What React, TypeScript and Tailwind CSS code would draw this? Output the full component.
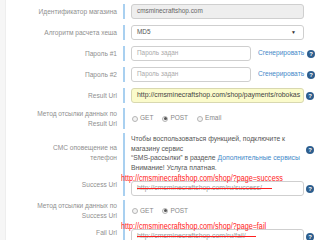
import React from "react";

const Help = ({ cls = "" }: { cls?: string }) => (
  <div className={"flex w-[8px] h-[8px] rounded-full bg-[#2d5e8e] text-white text-[6px] leading-none font-bold items-center justify-center shrink-0 " + cls}>?</div>
);

const Radio = ({ checked, label }: { checked?: boolean; label: string }) => (
  <div className="flex items-center mr-[9px]">
    <div className="w-[6px] h-[6px] rounded-full border border-[#b5b5b5] bg-[#f4f4f4] flex items-center justify-center mr-[2px]">
      {checked && <div className="w-[3px] h-[3px] rounded-full bg-[#555]" />}
    </div>
    <div className="text-[#888]">{label}</div>
  </div>
);

const Row = ({ label, children, cls = "" }: { label: React.ReactNode; children: React.ReactNode; cls?: string }) => (
  <div className={"flex items-center " + cls}>
    <div className="w-[118px] shrink-0 text-right text-[#8f8f8f] text-[6.6px] leading-[10px]">{label}</div>
    <div className="ml-[6px] border-l-2 border-[#a9d0f0] pl-[6px] flex-1 flex items-center self-stretch text-[7px] leading-none">{children}</div>
  </div>
);

const inputCls = "h-[15px] border border-[#cfcfcf] rounded-[3px] px-[5px] flex items-center leading-none overflow-hidden whitespace-nowrap shrink-0";

const Struck = ({ text }: { text: string }) => (
  <div className={inputCls + " w-[173px] text-[6.9px] text-[#999]"}>
    <div className="relative h-[9px] flex items-center">
      {text}
      <div className="absolute left-0 -right-[10px] top-[4px] h-[1px] bg-[#ff2020]" />
    </div>
  </div>
);

const Red = ({ text }: { text: string }) => (
  <div className="h-[10px] -ml-[10px] whitespace-nowrap text-[9px] leading-[10px] text-[#ff1a1a] origin-left scale-x-[0.8] -mb-[2px] relative z-10">{text}</div>
);

export default function App() {
  return (
    <div className="w-[320px] h-[240px] overflow-hidden bg-white flex" style={{ fontFamily: '"Liberation Sans", Arial, sans-serif' }}>
      <div className="w-[6px] shrink-0 bg-[#f6f6f6] border-r border-[#eeeeee]" />
      <div className="flex-1 -ml-[7px] pt-[4px] flex flex-col">
        <Row label="Идентификатор магазина">
          <div className={inputCls + " w-[173px] bg-[#eeeeee] text-[#666] text-[6.4px]"}>cmsminecraftshop.com</div>
        </Row>
        <Row label="Алгоритм расчета хеша" cls="mt-[6px]">
          <div className={inputCls + " w-[173px] bg-white justify-between text-[6.4px] text-[#555]"}>
            <div>MD5</div>
            <div className="text-[5px] text-[#333] mr-[2px]">▼</div>
          </div>
        </Row>
        <Row label="Пароль #1" cls="mt-[6px]">
          <div className={inputCls + " w-[120px] text-[#aaa] text-[6.4px]"}>Пароль задан</div>
          <div className="ml-[7px] text-[6.6px] text-[#3f89c9] whitespace-nowrap">Сгенерировать</div>
          <Help cls="ml-[3px]" />
        </Row>
        <Row label="Пароль #2" cls="mt-[6px]">
          <div className={inputCls + " w-[120px] text-[#aaa] text-[6.4px]"}>Пароль задан</div>
          <div className="ml-[7px] text-[6.6px] text-[#3f89c9] whitespace-nowrap">Сгенерировать</div>
          <Help cls="ml-[3px]" />
        </Row>
        <Row label="Result Url" cls="mt-[6px]">
          <div className={inputCls + " w-[173px] bg-[#fbfbcb] border-[#d8d8b0] text-[#444] text-[6.9px]"}>http://cmsminecraftshop.com/shop/payments/robokas</div>
          <Help cls="ml-[2px]" />
        </Row>
        <Row label={<>Метод отсылки данных по<br />Result Url</>} cls="mt-[5px]">
          <div className="flex items-center text-[6.5px] h-[21px] pl-[1px]">
            <Radio label="GET" />
            <Radio checked label="POST" />
            <Radio label="Email" />
          </div>
        </Row>
        <Row label={<>СМС оповещение на<br />телефон</>} cls="mt-[4px]">
          <div className="w-[173px] shrink-0 text-[6.8px] leading-[9.6px] text-[#555] py-[1px] whitespace-nowrap">
            Чтобы воспользоваться функцией, подключите к<br />
            магазину сервис<br />
            “SMS-рассылки” в разделе <span className="text-[#3f89c9]">Дополнительные сервисы</span><br />
            Внимание! Услуга платная.
          </div>
          <Help cls="ml-[2px] -mt-[6px]" />
        </Row>
        <Row label="Success Url">
          <div className="flex flex-col">
            <Red text="http://cmsminecraftshop.com/shop/?page=success" />
            <div className="flex items-center">
              <Struck text="http://cmsminecraftshop.com/ru/success/" />
              <Help cls="ml-[2px]" />
            </div>
          </div>
        </Row>
        <Row label={<>Метод отсылки данных по<br />Success Url</>} cls="mt-[4px]">
          <div className="flex items-center text-[6.5px] h-[21px] pl-[1px]">
            <Radio label="GET" />
            <Radio checked label="POST" />
          </div>
        </Row>
        <Row label="Fail Url">
          <div className="flex flex-col">
            <Red text="http://cmsminecraftshop.com/shop/?page=fail" />
            <div className="flex items-center">
              <Struck text="http://cmsminecraftshop.com/ru/fail/" />
              <Help cls="ml-[2px]" />
            </div>
          </div>
        </Row>
      </div>
    </div>
  );
}
